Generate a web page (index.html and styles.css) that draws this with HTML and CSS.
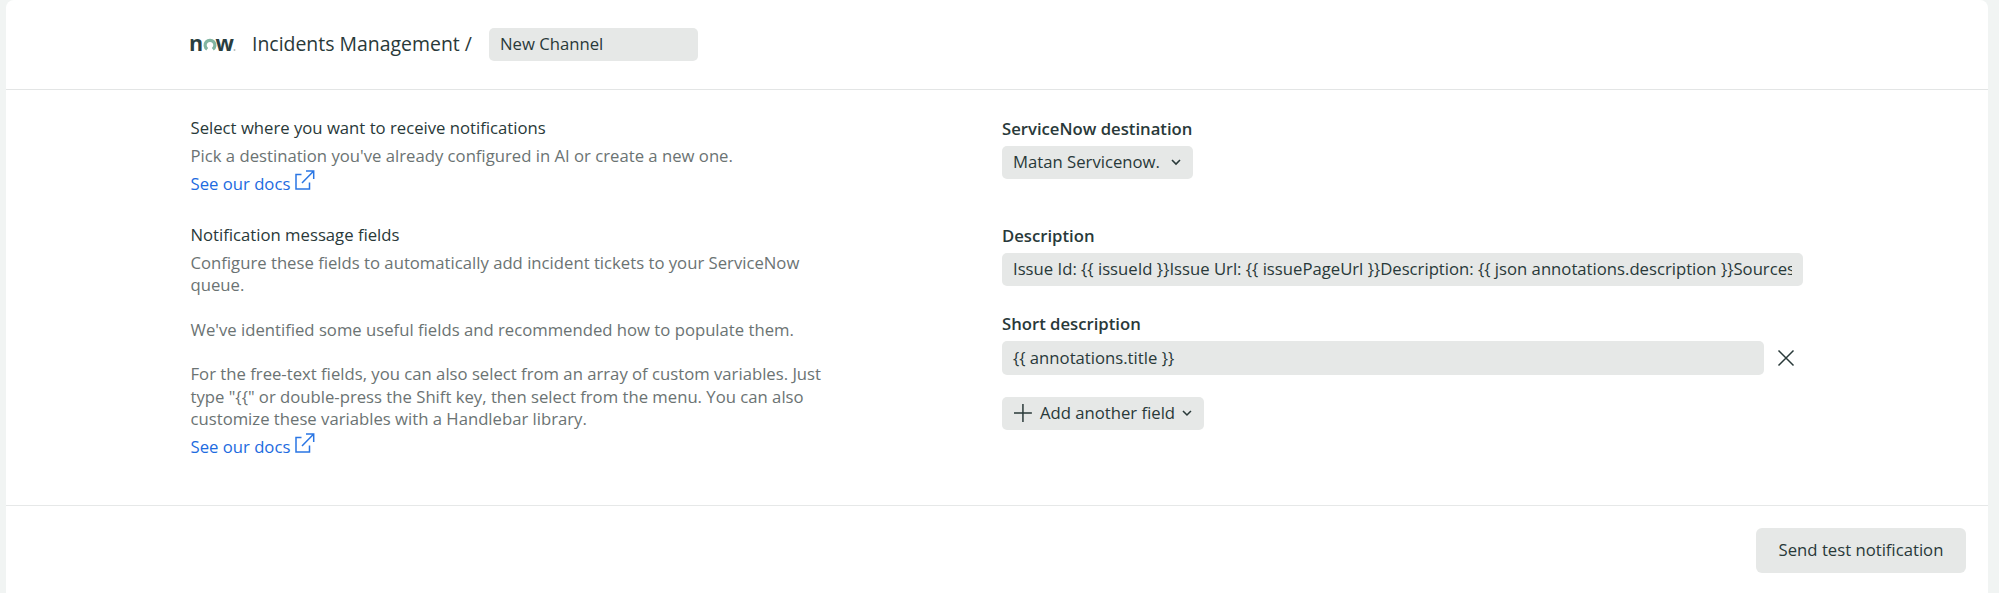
FILE: index.html
```html
<!DOCTYPE html>
<html lang="en">
<head>
<meta charset="utf-8">
<title>Incidents Management</title>
<link rel="stylesheet" href="styles.css">
</head>
<body>
<main class="panel">
  <header class="header">
    <svg class="logo" width="47" height="18" viewBox="0 0 47 18" role="img" aria-label="now">
      <text class="logo-text" x="-1" y="15">n</text>
      <path class="logo-o" d="M17.2 13.2 A4.9 4.9 0 1 1 22.8 13.2"/>
      <text class="logo-text" x="25.6" y="15">w</text>
      <circle class="logo-dot" cx="44.5" cy="14" r="1"/>
    </svg>
    <h1 class="title">Incidents Management /</h1>
    <div class="field name-field">New Channel</div>
  </header>

  <div class="content">
    <section class="help">
      <h2 class="help-title">Select where you want to receive notifications</h2>
      <p class="help-text">Pick a destination you've already configured in AI or create a new one.</p>
      <a class="docs">See our docs<svg class="docs-icon" width="20" height="20" viewBox="0 0 20 20"><path d="M6.5 4.5H1V19H14.5V12.5M7 13L18.7 1M11 1H18.7V9"/></svg></a>
    </section>
    <section class="form">
      <div class="label">ServiceNow destination</div>
      <div class="field select">Matan Servicenow.<svg class="chevron" width="10" height="7" viewBox="0 0 10 7"><path d="M1 1L5 5L9 1"/></svg></div>
    </section>

    <section class="help">
      <h2 class="help-title">Notification message fields</h2>
      <p class="help-text">Configure these fields to automatically add incident tickets to your ServiceNow<br>queue.<br><br>We've identified some useful fields and recommended how to populate them.<br><br>For the free-text fields, you can also select from an array of custom variables. Just<br>type "{{" or double-press the Shift key, then select from the menu. You can also<br>customize these variables with a Handlebar library.</p>
      <a class="docs">See our docs<svg class="docs-icon" width="20" height="20" viewBox="0 0 20 20"><path d="M6.5 4.5H1V19H14.5V12.5M7 13L18.7 1M11 1H18.7V9"/></svg></a>
    </section>
    <section class="form">
      <div class="label">Description</div>
      <div class="field wide"><span class="clip">Issue Id: {{ issueId }}Issue Url: {{ issuePageUrl }}Description: {{ json annotations.description }}Sources</span></div>
      <div class="label label-next">Short description</div>
      <div class="row">
        <div class="field short">{{ annotations.title }}</div>
        <svg class="close" width="18" height="18" viewBox="0 0 18 18"><path d="M1.5 1.5L16.5 16.5M16.5 1.5L1.5 16.5"/></svg>
      </div>
      <div class="field add"><svg class="plus" width="18" height="18" viewBox="0 0 18 18"><path d="M9 0V18M0 9H18"/></svg>Add another field<svg class="chevron" width="10" height="7" viewBox="0 0 10 7"><path d="M1 1L5 5L9 1"/></svg></div>
    </section>
  </div>

  <footer class="footer">
    <button class="send">Send test notification</button>
  </footer>
</main>
</body>
</html>
```
FILE: styles.css
```css
* { box-sizing: border-box; }
body {
  margin: 0;
  height: 593px;
  padding: 0 11px 0 6px;
  overflow: hidden;
  background: #f1f4f3;
  color: #293939;
  font: 16.7px/22.3px "Open Sans", sans-serif;
}
.panel {
  height: 593px;
  background: #fff;
  border-radius: 8px 8px 0 0;
}
.header {
  display: flex;
  align-items: center;
  height: 90px;
  padding-left: 184px;
  border-bottom: 1px solid #e3e5e5;
}
.logo { margin-right: 15px; overflow: visible; }
.logo-text { font: 700 21.5px "Open Sans", sans-serif; fill: #293e40; }
.logo-o { fill: none; stroke: #81b5a1; stroke-width: 3.2; }
.logo-dot { fill: #b5bdbc; }
.title { width: 237px; margin: 0; font-size: 19.45px; font-weight: 400; white-space: nowrap; }
.field {
  display: flex;
  align-items: center;
  height: 33.5px;
  padding: 0 11px;
  border-radius: 5px;
  background: #e6e8e7;
  white-space: nowrap;
}
.name-field { width: 209px; }
.content {
  display: grid;
  grid-template-columns: 811.5px 801px;
  grid-template-rows: 107px auto;
  height: 415px;
  padding: 27.5px 0 0 184.5px;
}
.help { margin-top: -0.5px; }
.help-title { height: 28px; margin: 0; font-size: inherit; font-weight: 400; }
.help-text { margin: 0 0 5.5px; color: #6b7373; white-space: nowrap; }
.docs { display: flex; color: #1d6be0; }
.docs-icon { margin: -3px 0 0 4.5px; }
.docs-icon path { fill: none; stroke: #2a76e4; stroke-width: 1.5; }
.label { height: 28px; font-weight: 600; }
.label-next { margin-top: 27px; }
.select { width: 191px; justify-content: space-between; }
.chevron { margin-right: 1px; }
.chevron path { fill: none; stroke: #293939; stroke-width: 1.6; }
.clip { flex: 1; overflow: hidden; }
.row { display: flex; align-items: center; }
.short { width: 762px; }
.close { margin-left: 12.5px; }
.close path, .plus path { fill: none; stroke: #293939; stroke-width: 1.5; }
.plus { margin: 0 8px 0 1px; }
.add { width: 202px; margin-top: 22px; }
.add .chevron { margin-left: 7px; }
.footer {
  display: flex;
  justify-content: flex-end;
  align-items: flex-start;
  height: 88px;
  padding: 22px 22px 0 0;
  border-top: 1px solid #e6e8e8;
}
.send {
  width: 210px;
  height: 45px;
  padding: 0;
  border: 0;
  border-radius: 6px;
  background: #e6e8e7;
  color: inherit;
  font: inherit;
}
```
